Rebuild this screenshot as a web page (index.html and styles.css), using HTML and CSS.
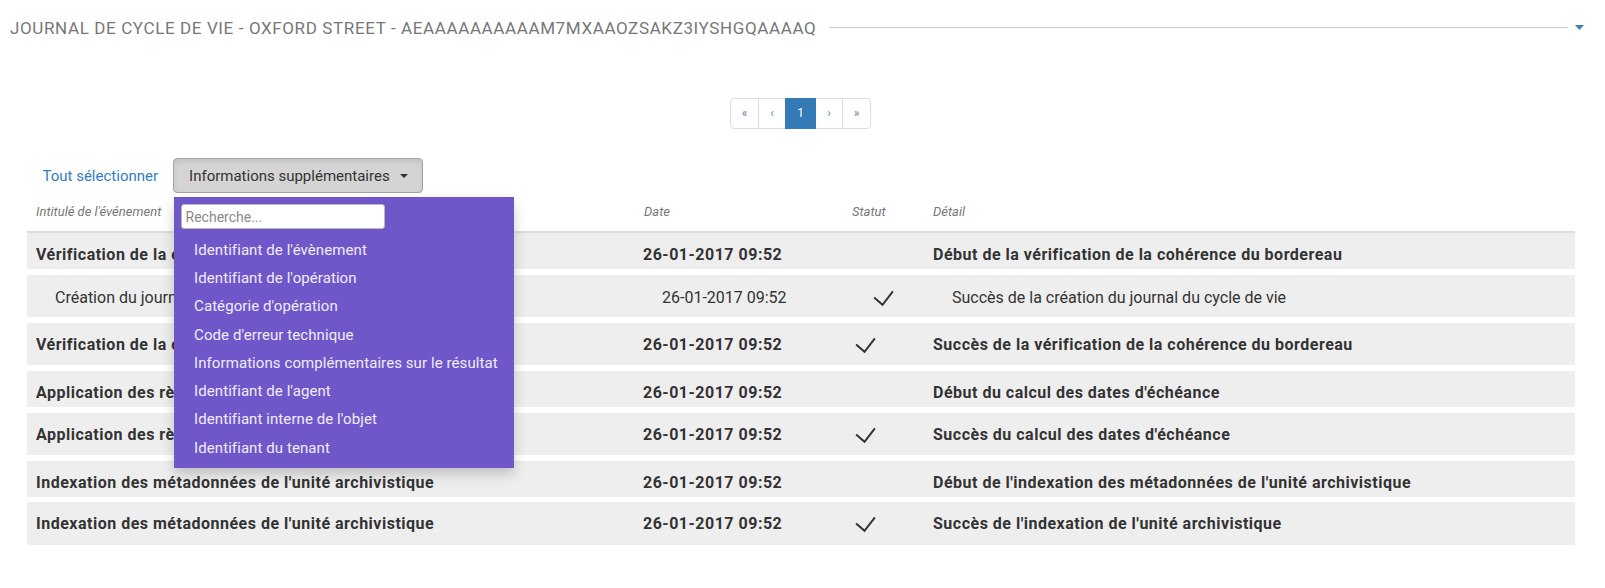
FILE: index.html
```html
<!DOCTYPE html>
<html lang="fr">
<head>
<meta charset="utf-8">
<title>Journal de cycle de vie</title>
<link rel="stylesheet" href="styles.css">
</head>
<body>
<section class="panel">
  <header class="panel-head">
    <h2 class="panel-title">JOURNAL DE CYCLE DE VIE - OXFORD STREET - AEAAAAAAAAAAM7MXAAOZSAKZ3IYSHGQAAAAQ</h2>
    <span class="rule"></span>
    <svg class="toggle" width="9" height="5" viewBox="0 0 9 5"><path d="M0 0 H9 L4.5 5 Z" fill="#3d7fc4"/></svg>
  </header>

  <nav class="pager">
    <ul class="pagination">
      <li class="first"><a>«</a></li>
      <li><a>‹</a></li>
      <li class="active"><a>1</a></li>
      <li><a>›</a></li>
      <li class="last"><a>»</a></li>
    </ul>
  </nav>

  <div class="toolbar">
    <a class="select-all">Tout sélectionner</a>
    <div class="dd">
      <button class="dd-btn">Informations supplémentaires <span class="caret"></span></button>
      <div class="dd-menu">
        <input class="dd-search" type="text" placeholder="Recherche...">
        <ul class="dd-list">
          <li>Identifiant de l'évènement</li>
          <li>Identifiant de l'opération</li>
          <li>Catégorie d'opération</li>
          <li>Code d'erreur technique</li>
          <li>Informations complémentaires sur le résultat</li>
          <li>Identifiant de l'agent</li>
          <li>Identifiant interne de l'objet</li>
          <li>Identifiant du tenant</li>
        </ul>
      </div>
    </div>
  </div>

  <div class="log">
    <div class="log-head">
      <span>Intitulé de l'événement</span>
      <span>Date</span>
      <span>Statut</span>
      <span>Détail</span>
    </div>

    <div class="log-row">
      <span>Vérification de la cohérence du bordereau</span>
      <span>26-01-2017 09:52</span>
      <span></span>
      <span>Début de la vérification de la cohérence du bordereau</span>
    </div>
    <div class="log-row child">
      <span>Création du journal du cycle de vie</span>
      <span>26-01-2017 09:52</span>
      <span class="ok"><svg width="22" height="27" viewBox="0 0 22 27"><path d="M1 9.5 L9.5 17 L20 3.5" fill="none" stroke="#333" stroke-width="2"/></svg></span>
      <span>Succès de la création du journal du cycle de vie</span>
    </div>
    <div class="log-row">
      <span>Vérification de la cohérence du bordereau</span>
      <span>26-01-2017 09:52</span>
      <span class="ok"><svg width="22" height="27" viewBox="0 0 22 27"><path d="M1 9.5 L9.5 17 L20 3.5" fill="none" stroke="#333" stroke-width="2"/></svg></span>
      <span>Succès de la vérification de la cohérence du bordereau</span>
    </div>
    <div class="log-row">
      <span>Application des règles de gestion</span>
      <span>26-01-2017 09:52</span>
      <span></span>
      <span>Début du calcul des dates d'échéance</span>
    </div>
    <div class="log-row">
      <span>Application des règles de gestion</span>
      <span>26-01-2017 09:52</span>
      <span class="ok"><svg width="22" height="27" viewBox="0 0 22 27"><path d="M1 9.5 L9.5 17 L20 3.5" fill="none" stroke="#333" stroke-width="2"/></svg></span>
      <span>Succès du calcul des dates d'échéance</span>
    </div>
    <div class="log-row">
      <span>Indexation des métadonnées de l'unité archivistique</span>
      <span>26-01-2017 09:52</span>
      <span></span>
      <span>Début de l'indexation des métadonnées de l'unité archivistique</span>
    </div>
    <div class="log-row">
      <span>Indexation des métadonnées de l'unité archivistique</span>
      <span>26-01-2017 09:52</span>
      <span class="ok"><svg width="22" height="27" viewBox="0 0 22 27"><path d="M1 9.5 L9.5 17 L20 3.5" fill="none" stroke="#333" stroke-width="2"/></svg></span>
      <span>Succès de l'indexation de l'unité archivistique</span>
    </div>
  </div>
</section>
</body>
</html>
```

FILE: styles.css
```css
* { box-sizing: border-box; }
html, body { margin: 0; padding: 0; background: #fff; }
body {
  font-family: Roboto, "Liberation Sans", sans-serif;
  color: #333;
  width: 1605px;
}

.panel { padding: 17.5px 21px 40px 10px; }

.panel-head {
  display: flex;
  align-items: center;
  height: 20px;
}
.panel-title {
  margin: 0;
  font-size: 17px;
  line-height: 20px;
  font-weight: 400;
  letter-spacing: 0.62px;
  color: #777;
  white-space: nowrap;
}
.rule {
  flex: 1;
  height: 1px;
  background: #cfcfcf;
  margin: 0 7px 0 13px;
}
.toggle { display: block; }

.pager {
  display: flex;
  justify-content: center;
  margin-top: 60.5px;
  padding-left: 7px;
}
.pagination {
  display: flex;
  margin: 0;
  padding: 0;
  list-style: none;
}
.pagination li a {
  display: block;
  width: 28px;
  height: 31px;
  text-align: center;
  font-size: 12px;
  line-height: 29px;
  color: #5d7fa3;
  border: 1px solid #ddd;
  margin-left: -1px;
  background: #fff;
}
.pagination li.first a { width: 29px; border-radius: 4px 0 0 4px; margin-left: 0; }
.pagination li.last a { width: 29px; border-radius: 0 4px 4px 0; }
.pagination li.active a {
  width: 31px;
  background: #337ab7;
  border-color: #337ab7;
  color: #fff;
  position: relative;
}

.toolbar {
  display: flex;
  align-items: center;
  margin-top: 29px;
  padding-left: 32.5px;
  gap: 15px;
  height: 35px;
}
.select-all {
  font-size: 15px;
  color: #2f7dc4;
  cursor: pointer;
}
.dd { position: relative; }
.dd-btn {
  display: flex;
  align-items: center;
  white-space: nowrap;
  height: 35px;
  width: 250px;
  padding: 0 0 0 15px;
  font-family: inherit;
  font-size: 15px;
  color: #333;
  background: #d4d4d4;
  border: 1px solid #a3a3a3;
  border-radius: 4px;
  box-shadow: inset 0 3px 5px rgba(0,0,0,.08);
}
.caret {
  display: inline-block;
  width: 0; height: 0;
  margin-left: 10px;
  border-left: 4px solid transparent;
  border-right: 4px solid transparent;
  border-top: 4px solid #333;
}
.dd-menu {
  position: absolute;
  z-index: 10;
  left: 1px;
  top: 39.3px;
  width: 340px;
  height: 270.4px;
  padding: 7px 0 0 6.5px;
  background: #6f57c9;
  box-shadow: 0 6px 12px rgba(0,0,0,.2);
}
.dd-search {
  display: block;
  width: 204px;
  height: 25px;
  padding: 0 4px;
  font-family: inherit;
  font-size: 14px;
  color: #555;
  border: 1px solid #bbb;
  border-radius: 3px;
  background: #fff;
}
.dd-search::placeholder { color: #8a8a8a; }
.dd-list {
  list-style: none;
  margin: 6.7px 0 0 0;
  padding: 0 0 0 13.5px;
}
.dd-list li {
  font-size: 15px;
  line-height: 20.24px;
  letter-spacing: 0.08px;
  padding: 4px 0;
  color: #efecfb;
  white-space: nowrap;
}

.log {
  margin: 0 0 0 17px;
  width: 1548px;
}
.log-head, .log-row {
  display: grid;
  grid-template-columns: 607px 210px 80px 1fr;
}
.log-head {
  border-bottom: 2px solid #ddd;
  font-size: 13px;
  font-style: italic;
  color: #777;
  line-height: 18px;
}
.log-head span { padding: 10px 9px 10px 9px; }
.log-head span:nth-child(2) { padding-left: 10px; }
.log-head span:nth-child(3) { padding-left: 8px; }

.log-row {
  background: #eee;
  margin-top: 5.75px;
  font-size: 16px;
  font-weight: 700;
  letter-spacing: 0.5px;
  line-height: 20px;
}
.log-head + .log-row { margin-top: 0; }
.log-row span {
  padding: 12px 9px 3.8px 9px;
  white-space: nowrap;
  overflow: hidden;
}
.log-row span.ok { padding-left: 11px; }
.log-row span.ok svg { display: block; height: 26.7px; }
.log-row.child { font-weight: 400; letter-spacing: 0; }
.log-row.child span { padding-left: 28px; padding-top: 13px; padding-bottom: 2.8px; }
.log-row.child span.ok { padding-left: 29px; }
```
